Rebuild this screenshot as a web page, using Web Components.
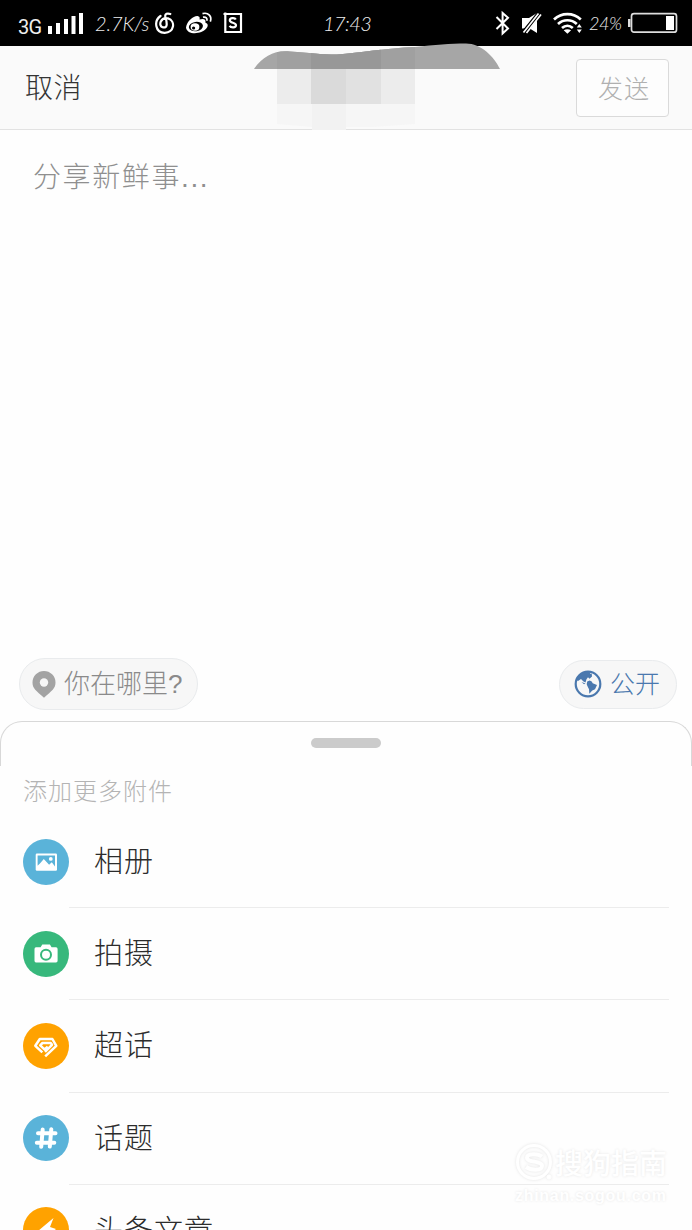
<!DOCTYPE html>
<html lang="zh-CN">
<head>
<meta charset="UTF-8">
<title>分享新鲜事</title>
<style>
    html, body {
        margin: 0;
        height: 1230px;
        overflow: hidden;
        background: #fefefe;
        font-family: "Liberation Sans", "Noto Sans CJK SC", sans-serif;
    }
</style>
</head>
<body>
<compose-page></compose-page>

<script>
const icons = {
    photo: `<svg viewBox="0 0 46 46"><rect x="12.7" y="14.5" width="21.3" height="17.2" rx="1.2" fill="#fff"/><path d="M14.6 16.5H32v11l-3.2-4.3-2.7 2.5-5.3-5.7-3.4 4-2.8 2.8z" fill="currentColor"/><circle cx="27.8" cy="19.9" r="1.9" fill="#fff"/></svg>`,
    camera: `<svg viewBox="0 0 46 46"><path d="M13 16.3h4.6l1.7-2.7h7.6l1.7 2.7H33q1.6 0 1.6 1.6v11.9q0 1.6-1.6 1.6H13q-1.5 0-1.5-1.6V17.9q0-1.6 1.5-1.6z" fill="#fff"/><circle cx="23" cy="23.7" r="5" fill="#fff" stroke="currentColor" stroke-width="2"/></svg>`,
    gem: `<svg viewBox="0 0 46 46" fill="none" stroke="#fff" stroke-width="2.5" stroke-linejoin="round"><path d="M22.2 33.4 33.3 22.8 29.4 16H16.8l-4.5 6.8 7 6.5"/><path d="m22 28.8 7-7-1.3-1.8h-8.2l-2.3 2.3 4.3 4.1 3.2-2.8"/></svg>`,
    hash: `<svg viewBox="0 0 46 46" fill="none" stroke="#fff" stroke-width="4" stroke-linecap="round"><path d="M15 18.3h17.5M13.8 27.7h17.5M19.7 14.5l-1.5 17.3M28.3 14.2l-1.5 17.4"/></svg>`,
    bolt: `<svg viewBox="0 0 46 46"><path d="M30.500 11 15 24l7 2-6 10 17-14-6-2z" fill="#fff"/></svg>`
};

class StatusBar extends HTMLElement {
    constructor() {
        super();
        this.attachShadow({ mode: 'open' });
        this.shadowRoot.innerHTML = `
        <style>
        :host {
            display: flex;
            height: 46px;
            box-sizing: border-box;
            padding: 0 14px 0 18px;
            background: #000;
            color: #eee;
        }
        div {
            display: flex;
            align-items: center;
        }
        .right {
            margin-left: auto;
        }
        svg {
            display: block;
            flex: none;
        }
        .net {
            width: 30px;
            padding-top: 7px;
            font: 20px/24px Roboto, sans-serif;
            letter-spacing: -0.8px;
        }
        .script {
            font: italic 300 20px/24px Lato, sans-serif;
            white-space: nowrap;
        }
        .speed { width: 60px; margin-left: 12px; letter-spacing: -0.1px; }
        .time { margin-left: 80px; padding-top: 11px; letter-spacing: -0.6px; }
        .power { width: 33px; margin: 0 6px; font-size: 18px; letter-spacing: -0.4px; }
        </style>
        <div>
            <span class="net">3G</span>
            <svg width="35" height="46" fill="#fff"><path d="M0 26h4v8H0zM8 23h4v11H8zM16 19h4v15h-4zM23.5 16h4v18h-4zM31 13h4v21h-4z"/></svg>
            <span class="script speed">2.7K/s</span>
            <svg width="20" height="46" fill="none" stroke="#fff" stroke-width="2.2" stroke-linecap="round"><path d="M5.500 16C-1.500 21 .2 32.500 9.500 32.800c9.800.2 11.500-12 3.500-14.400-7.300-1.500-10 7-5.500 8.800 5 1.400 5-3.200 2.800-10.700-.5-2.700 2-3.500 5-2.500"/></svg>
            <svg width="29" height="46" style="margin-left:10px"><path d="M1 27.5C2 21 9 15.4 13 16.2c2.2.4 1.700 2.300 1.500 3.400 4-1.500 7 0 5.800 3 2.500 1 3.500 3 1 6C16.500 34.500 2 35.500 1 27.500z" fill="#fff"/><ellipse cx="10.900" cy="26.600" rx="7.100" ry="4.700" transform="rotate(-8 10.900 26.600)"/><ellipse cx="10" cy="27" rx="4.400" ry="3.700" fill="#fff"/><circle cx="8.600" cy="28" r="1.600"/><path d="M17.500 13.600c6-1.600 9.700 3 7.800 8M18 17.200c3-.6 4.600 1.300 3.800 3.500" fill="none" stroke="#fff" stroke-width="1.700"/></svg>
            <svg width="20" height="46" style="margin-left:9px" fill="none" stroke="#fff" stroke-width="2.200"><path d="M.5 14H18v18H2.300V12.500M12.800 19.500c-1-2-6-1.800-6 .8 0 3.200 6.200 1.700 6.200 5 0 2.800-5.200 2.800-6.400.4"/></svg>
        </div>
        <span class="script time">17:43</span>
        <div class="right">
            <svg width="16" height="46" fill="none" stroke="#fff" stroke-width="2"><path d="m1.500 17 11.500 11.500-5.400 5V13l5.400 4.700L1.500 29"/></svg>
            <svg width="21" height="46" style="margin-left:10px"><path d="M1 18h7l8-5v20l-8-5H1z" fill="#fff"/><path d="M1.500 34.500 19 12.500" stroke="#000" stroke-width="5"/><path d="M1 28V18h7l2 1-8 10z" fill="#fff"/><path d="m2.500 32.500 15-19M5.500 33l14.500-18.500" stroke="#fff" stroke-width="1.700"/></svg>
            <svg width="30" height="46" style="margin-left:11px" fill="none" stroke="#fff" stroke-width="2.700"><path d="M1 19.500c7.600-7.300 19.200-7.300 26.800 0M5 24c5.400-5 13.400-5 18.800 0M9 28c3.300-3 7.500-3 10.800 0"/><path d="m10.700 30.200 3.700 3.500 3.700-3.500q-3.700-2-7.400 0zM23.800 27.500h5L26.300 24zM23.800 29.500h5L26.300 33z" fill="#fff" stroke="none"/></svg>
            <span class="script power">24%</span>
            <svg width="50" height="46"><rect x="3.500" y="13.700" width="45" height="18.500" rx="2.500" fill="none" stroke="#ddd" stroke-width="1.700"/><path d="M0 19h2.500v8H0z" fill="#ddd"/><path d="M38 16h8v14h-8z" fill="#fff"/></svg>
        </div>
        `;
    }
}
customElements.define('status-bar', StatusBar);

class ComposeHeader extends HTMLElement {
    constructor() {
        super();
        this.attachShadow({ mode: 'open' });
        this.shadowRoot.innerHTML = `
        <style>
        :host {
            position: relative;
            display: flex;
            align-items: center;
            justify-content: space-between;
            box-sizing: border-box;
            height: 84px;
            padding: 0 23px 0 25px;
            background: #fafafa;
            border-bottom: 1px solid #e2e2e2;
        }
        .cancel {
            padding-bottom: 4px;
            font-size: 28px;
            font-weight: 300;
            letter-spacing: 0.5px;
            color: #333;
        }
        .send {
            box-sizing: border-box;
            width: 93px;
            height: 58px;
            border: 1.5px solid #dadada;
            border-radius: 4px;
            background: #fdfdfd;
            font: 300 25px/54px "Liberation Sans", "Noto Sans CJK SC", sans-serif;
            letter-spacing: 1px;
            color: #b0b0b0;
            padding: 2px 0 0 3px;
        }
        /* hides the account name, reaches over the status bar */
        .mask {
            position: absolute;
            left: 250px;
            top: -6px;
        }
        </style>
        <span class="cancel">取消</span>
        <svg class="mask" width="260" height="92">
            <path d="M27 29h138v35H27z" fill="#ececec"/>
            <path d="M61 29h35v35H61z" fill="#dadada"/>
            <path d="M96 29h35v35H96z" fill="#e1e1e1"/>
            <path d="M27 64h138v20l-42 3H62l-35-3z" fill="#f6f6f6"/>
            <path d="M62 64h34v26H62z" fill="#f2f2f2"/>
            <path id="blob" d="M4 29C13 16 25 10 40 11.500 60 13 70 14.500 87 14.500 110 13 135 8 165 7 185 5 200 3.500 216 3.500c15 0 28 13 34 25.500z" fill="#a6a6a6"/>
            <clipPath id="cut"><use href="#blob"/></clipPath>
            <g clip-path="url(#cut)">
                <path d="M27 0h138v29H27z" fill="#a0a0a0"/>
                <path d="M61 0h70v29H61z" fill="#989898"/>
            </g>
        </svg>
        <button class="send">发送</button>
        `;
    }
}
customElements.define('compose-header', ComposeHeader);

class PillButton extends HTMLElement {
    constructor() {
        super();
        this.attachShadow({ mode: 'open' });
        this.shadowRoot.innerHTML = `
        <style>
        :host {
            display: flex;
            align-items: center;
            box-sizing: border-box;
            border: 1px solid #e9ebed;
            border-radius: 26px;
            background: #f7f7f7;
            font-size: 26px;
            font-weight: 300;
            line-height: 46px;
            white-space: nowrap;
        }
        </style>
        <slot name="icon"></slot>
        <slot></slot>
        `;
    }
}
customElements.define('pill-button', PillButton);

class AttachItem extends HTMLElement {
    connectedCallback() {
        this.attachShadow({ mode: 'open' });
        this.shadowRoot.innerHTML = `
        <style>
        :host {
            display: flex;
            height: 92.2px;
            padding: 0 23px;
        }
        .icon {
            flex: none;
            width: 46px;
            height: 46px;
            margin-top: 22.5px;
            border-radius: 50%;
            background: ${this.getAttribute('color')};
            color: ${this.getAttribute('color')};
        }
        .label {
            flex: 1;
            box-sizing: border-box;
            padding-left: 25px;
            border-bottom: 1px solid #ececec;
            font-size: 29px;
            font-weight: 300;
            letter-spacing: 1px;
            line-height: 93px;
            color: #2c2c2c;
        }
        </style>
        <div class="icon">${icons[this.getAttribute('icon')]}</div>
        <div class="label"><slot></slot></div>
        `;
    }
}
customElements.define('attach-item', AttachItem);

class AttachSheet extends HTMLElement {
    constructor() {
        super();
        this.attachShadow({ mode: 'open' });
        this.shadowRoot.innerHTML = `
        <style>
        :host {
            display: block;
            flex: none;
            height: 509px;
            overflow: hidden;
        }
        .top {
            box-sizing: border-box;
            height: 45px;
            border: 1.5px solid #d8d8d8;
            border-bottom: 0;
            border-radius: 22px 22px 0 0;
            padding-top: 16px;
        }
        .grip {
            width: 70px;
            height: 10px;
            margin: 0 auto;
            border-radius: 5px;
            background: #cbcbcb;
        }
        .title {
            height: 50px;
            padding-left: 23px;
            font-size: 24px;
            font-weight: 300;
            letter-spacing: 1px;
            line-height: 51px;
            color: #b4b4b4;
        }
        </style>
        <div class="top"><div class="grip"></div></div>
        <div class="title">添加更多附件</div>
        <slot></slot>
        `;
    }
}
customElements.define('attach-sheet', AttachSheet);

class WaterMark extends HTMLElement {
    constructor() {
        super();
        this.attachShadow({ mode: 'open' });
        this.shadowRoot.innerHTML = `
        <style>
        :host {
            position: absolute;
            left: 515px;
            top: 1142px;
            width: 156px;
            color: #fff;
            font-weight: 500;
            white-space: nowrap;
            text-shadow: 0 0 3px #e6e6e6;
        }
        .name {
            display: flex;
            align-items: center;
            gap: 1px;
            height: 40px;
            font-size: 28px;
        }
        svg {
            flex: none;
            filter: drop-shadow(0 0 1.5px #e4e4e4);
        }
        .site {
            font-size: 16px;
            font-weight: 700;
            line-height: 28px;
            letter-spacing: 0.7px;
        }
        </style>
        <div class="name">
            <svg width="39" height="40" fill="none" stroke="#fff"><circle cx="19" cy="20" r="16.5" stroke-width="3"/><path d="M27 14.5c-4-3-15-3.5-15 1.2 0 5 15 2.8 15 8.300 0 5-11 4.500-16 1" stroke-width="4"/><circle cx="34" cy="35" r="2" fill="#fff"/></svg>
            <span>搜狗指南</span>
        </div>
        <div class="site">zhinan.sogou.com</div>
        `;
    }
}
customElements.define('water-mark', WaterMark);

class ComposePage extends HTMLElement {
    constructor() {
        super();
        this.attachShadow({ mode: 'open' });
        this.shadowRoot.innerHTML = `
        <style>
        :host {
            display: flex;
            flex-direction: column;
            position: relative;
            height: 1230px;
            overflow: hidden;
        }
        .editor {
            flex: 1;
            padding: 26px 33px 22px;
            font-size: 28px;
            font-weight: 300;
            letter-spacing: 1.6px;
            line-height: 44px;
            color: #8f8f8f;
        }
        .tools {
            display: flex;
            justify-content: space-between;
            align-items: center;
            height: 52px;
            padding: 0 15px 11px 19px;
        }
        .place {
            width: 179px;
            height: 52px;
            padding-left: 12px;
            gap: 8px;
            color: #8a8a8a;
        }
        .public {
            width: 118px;
            height: 49px;
            padding-left: 14px;
            gap: 8px;
            color: #4a78ae;
            font-size: 25px;
        }
        svg { flex: none; }
        </style>
        <status-bar></status-bar>
        <compose-header></compose-header>
        <div class="editor">分享新鲜事...</div>
        <div class="tools">
            <pill-button class="place">
                <svg slot="icon" width="24" height="27"><path d="M12 0a11.5 11.5 0 0 1 11.5 11.5c0 6-3.5 8-11.5 15.2C4 19.5.5 17.5.5 11.5A11.5 11.5 0 0 1 12 0z" fill="#a3a3a3"/><circle cx="12" cy="11.5" r="4.2" fill="#f7f7f7"/></svg>
                <span>你在哪里?</span>
            </pill-button>
            <pill-button class="public">
                <svg slot="icon" width="28" height="28"><circle cx="14" cy="14" r="12.3" fill="none" stroke="#4a78ae" stroke-width="2.2"/><path d="M2.500 10C5 4 10 1.500 15.500 2l1 2 1.200-.5.3 3-2.500 2.200-1.500-1.500-1.500 2-1 3.300-2-1-2.500-2.500-3 2zM13.200 11.500l2.500-1 2 1 1 1.700 4.300 1.800-2 4.300-2.700 1.200-3 3.200-.3-4.500-1.500-3-.8-2zM7.500 12l4 1.500-1.500.7z" fill="#4a78ae"/></svg>
                <span>公开</span>
            </pill-button>
        </div>
        <attach-sheet>
            <attach-item icon="photo" color="#5ab3d9">相册</attach-item>
            <attach-item icon="camera" color="#37b87c">拍摄</attach-item>
            <attach-item icon="gem" color="#ffa200">超话</attach-item>
            <attach-item icon="hash" color="#5ab3d9">话题</attach-item>
            <attach-item icon="bolt" color="#ffa200">头条文章</attach-item>
        </attach-sheet>
        <water-mark></water-mark>
        `;
    }
}
customElements.define('compose-page', ComposePage);
</script>
</body>
</html>
